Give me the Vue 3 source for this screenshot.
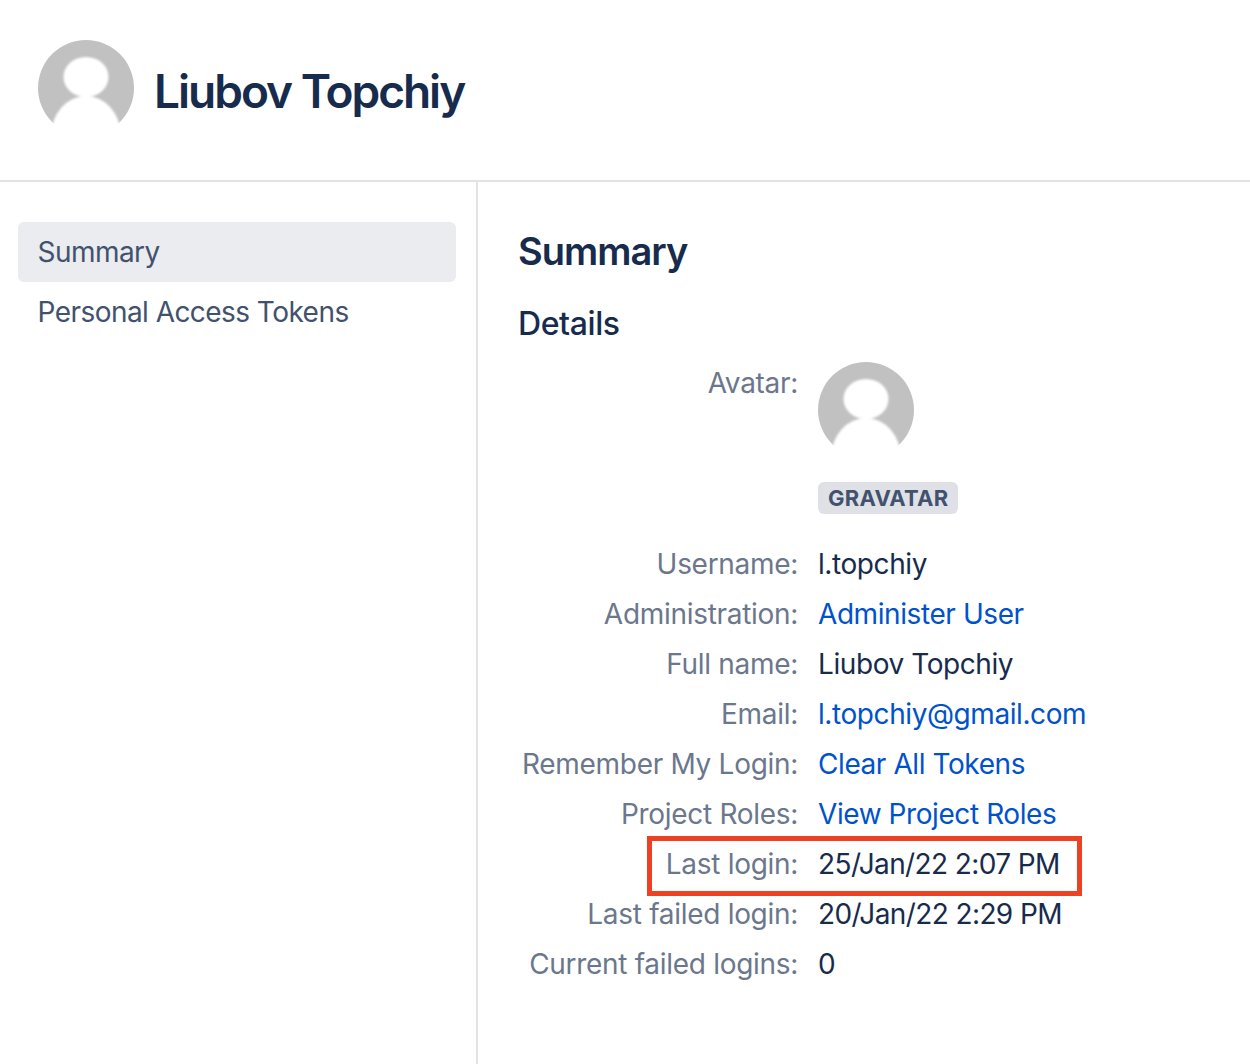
<script setup>
const rows = [
  { label: 'Username:', value: 'l.topchiy' },
  { label: 'Administration:', value: 'Administer User', link: true },
  { label: 'Full name:', value: 'Liubov Topchiy' },
  { label: 'Email:', value: 'l.topchiy@gmail.com', link: true },
  { label: 'Remember My Login:', value: 'Clear All Tokens', link: true },
  { label: 'Project Roles:', value: 'View Project Roles', link: true },
  { label: 'Last login:', value: '25/Jan/22 2:07 PM', mark: true, date: true },
  { label: 'Last failed login:', value: '20/Jan/22 2:29 PM', date: true },
  { label: 'Current failed logins:', value: '0' },
]
</script>

<template>
  <div class="page">
    <header class="head">
      <svg class="avatar" viewBox="0 0 96 96" width="96" height="96">
        <defs>
          <filter id="avatar-blur" x="-20%" y="-20%" width="140%" height="140%"><feGaussianBlur stdDeviation="1" /></filter>
        </defs>
        <circle cx="48" cy="48" r="48" fill="#c1c1c1" />
        <g fill="#fff" filter="url(#avatar-blur)">
          <ellipse cx="48" cy="37" rx="22.5" ry="20" />
          <ellipse cx="48" cy="96" rx="35" ry="40" />
          <rect x="0" y="85" width="96" height="15" />
        </g>
      </svg>
      <h1 class="name">Liubov Topchiy</h1>
    </header>
    <div class="body">
      <nav class="side">
        <a class="item active">Summary</a>
        <a class="item">Personal Access Tokens</a>
      </nav>
      <main class="main">
        <h2 class="title">Summary</h2>
        <h3 class="sub">Details</h3>
        <div class="table">
          <div class="label avatar-label">Avatar:</div>
          <div class="avatar-cell">
            <svg class="avatar" viewBox="0 0 96 96" width="96" height="96">
              <circle cx="48" cy="48" r="48" fill="#c1c1c1" />
              <g fill="#fff" filter="url(#avatar-blur)">
                <ellipse cx="48" cy="37" rx="22.5" ry="20" />
                <ellipse cx="48" cy="96" rx="35" ry="40" />
                <rect x="0" y="85" width="96" height="15" />
              </g>
            </svg>
            <span class="tag">GRAVATAR</span>
          </div>
          <div v-for="r in rows" :key="r.label" class="row">
            <div class="label">{{ r.label }}</div>
            <div class="value" :class="{ link: r.link, date: r.date }">{{ r.value }}</div>
            <div v-if="r.mark" class="mark"></div>
          </div>
        </div>
      </main>
    </div>
  </div>
</template>

<style>
html, body { margin: 0; background: #fff; }
</style>

<style scoped>
.page {
  width: 1250px;
  height: 1064px;
  overflow: hidden;
  font-family: Inter, "Liberation Sans", sans-serif;
  color: #172b4d;
  background: #fff;
}
.head {
  height: 180px;
  border-bottom: 2px solid #e1e2e8;
  display: flex;
  align-items: flex-start;
  padding-left: 38px;
}
.head .avatar { margin-top: 40px; }
.avatar { display: block; flex: none; }
.name {
  margin: 51px 0 0 20px;
  font-size: 46px;
  line-height: 80px;
  font-weight: 600;
  letter-spacing: -2px;
  color: #172b4d;
}
.body { display: flex; height: 882px; }
.side {
  box-sizing: border-box;
  border-right: 2px solid #e1e2e8;
  width: 478px;
  padding: 40px 20px 0 18px;
  flex: none;
}
.item {
  display: block;
  height: 60px;
  line-height: 60px;
  padding-left: 19.5px;
  font-size: 28px;
  letter-spacing: -0.55px;
  color: #42526e;
  border-radius: 6px;
}
.active { background: #ebecf0; }
.main { padding: 39px 0 0 40px; flex: 1; min-width: 0; }
.title {
  margin: 0;
  font-size: 38px;
  line-height: 60px;
  font-weight: 600;
  letter-spacing: -1px;
  color: #172b4d;
}
.sub {
  margin: 13px 0 0;
  font-size: 32px;
  line-height: 60px;
  font-weight: 500;
  letter-spacing: -0.4px;
  color: #172b4d;
}
.table { margin-top: 8px; display: grid; grid-template-columns: 280px 1fr; column-gap: 20px; }
.label {
  text-align: right;
  font-size: 28px;
  line-height: 50px;
  letter-spacing: -0.3px;
  color: #6b778c;
  white-space: nowrap;
}
.avatar-label { line-height: 42px; }
.avatar-cell { padding-bottom: 25px; }
.tag {
  display: inline-block;
  margin-top: 24px;
  height: 32px;
  line-height: 32px;
  padding: 0 10px;
  border-radius: 6px;
  background: #dfe1e6;
  color: #42526e;
  font-size: 22px;
  font-weight: 700;
  letter-spacing: 0.25px;
}
.row {
  grid-column: 1 / -1;
  display: grid;
  grid-template-columns: 280px 1fr;
  column-gap: 20px;
  position: relative;
}
.value {
  font-size: 28px;
  line-height: 50px;
  letter-spacing: -0.42px;
  color: #172b4d;
  white-space: nowrap;
}
.date { letter-spacing: -0.6px; }
.link { color: #0052cc; }
.mark {
  position: absolute;
  left: 129px;
  top: -3px;
  width: 435px;
  height: 60px;
  box-sizing: border-box;
  border: 5px solid #ee4023;
}
</style>
